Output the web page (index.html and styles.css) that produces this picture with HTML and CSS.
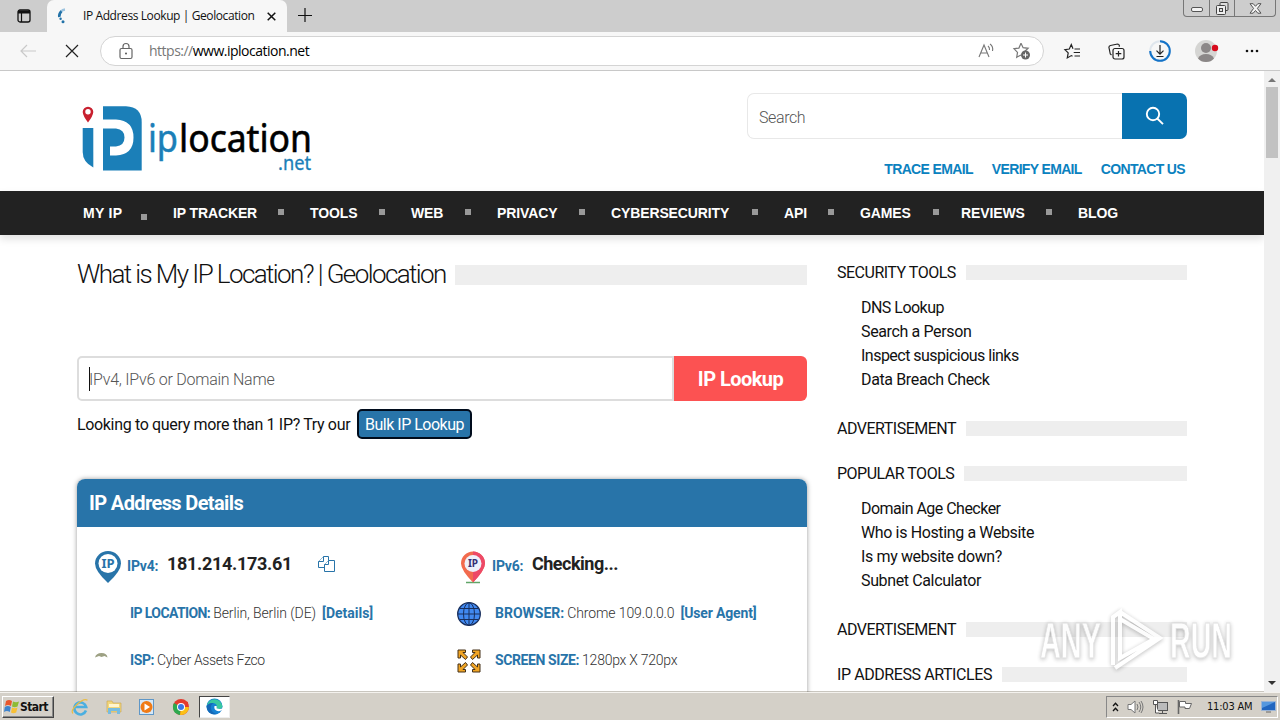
FILE: index.html
```html
<!DOCTYPE html>
<html lang="en">
<head>
  <meta charset="utf-8">
  <title>IP Address Lookup | Geolocation</title>
  <link rel="stylesheet" href="styles.css">
</head>
<body>
  <!-- browser tabs -->
  <div class="tab-bar">
    <div class="tab-actions">
      <svg width="14" height="14" viewBox="0 0 14 14"><rect x="1" y="1" width="12" height="12" rx="2" fill="none" stroke="#111" stroke-width="1.3"/><path d="M1 1.5h12v3H1z" fill="#111"/><path d="M4.5 4v9" stroke="#111" stroke-width="1.2"/></svg>
    </div>
    <div class="tab">
      <svg class="tab-spinner" width="12" height="16" viewBox="0 0 12 16"><path d="M8 1.5a6 6 0 0 0-4 2" fill="none" stroke="#9cc3df" stroke-width="2.4"/><path d="M4.5 3.2Q1.8 5.6 2.3 9" fill="none" stroke="#2272a8" stroke-width="2.6"/><circle cx="3.6" cy="10.7" r="1.2" fill="#2272a8"/><circle cx="6" cy="13.7" r="1.5" fill="#2272a8"/></svg>
      <span class="tab-title">IP Address Lookup | Geolocation</span>
      <svg class="tab-close" width="9" height="9" viewBox="0 0 9 9"><path d="M.7.7l7.6 7.6M8.3.7L.7 8.3" stroke="#111" stroke-width="1.5"/></svg>
    </div>
    <svg class="new-tab" width="14" height="14" viewBox="0 0 14 14"><path d="M7 0v14M0 7.5h14" stroke="#111" stroke-width="1.2"/></svg>
    <div class="window-buttons">
      <span><svg width="12" height="5"><rect x=".5" y=".5" width="11" height="4" rx="1.5" fill="#f4f4f4" stroke="#555"/></svg></span>
      <span><svg width="13" height="13" fill="#ddd" stroke="#444"><rect x="4" y=".5" width="8" height="8" rx="1"/><rect x=".5" y="3.5" width="9" height="9" rx="1" fill="#eee"/><rect x="3.5" y="6.5" width="3" height="3"/></svg></span>
      <span><svg width="13" height="11" viewBox="0 0 13 11"><path d="M1 .7h3.2l2.3 2.6L8.8.7H12L8.4 5.4 12 10.2H8.8L6.5 7.5 4.2 10.2H1l3.6-4.8z" fill="#f4f4f4" stroke="#555"/></svg></span>
    </div>
  </div>

  <!-- address bar -->
  <div class="toolbar">
    <svg class="back" width="18" height="14" viewBox="0 0 18 14"><path d="M8 1L2 7l6 6M2 7h15" fill="none" stroke="#c9c9c9" stroke-width="1.2"/></svg>
    <svg class="stop" width="14" height="14" viewBox="0 0 14 14"><path d="M1 1l12 12M13 1L1 13" stroke="#222" stroke-width="1.2"/></svg>
    <div class="address">
      <svg class="lock" width="14" height="17" viewBox="0 0 14 17"><rect x="1" y="5.5" width="12" height="10" rx="1.5" fill="none" stroke="#666" stroke-width="1.2"/><path d="M4 5.5V3.500a3 3 0 0 1 6 0v2" fill="none" stroke="#666" stroke-width="1.2"/><circle cx="7" cy="10.5" r="1" fill="#555"/></svg>
      <span class="url"><span>https://</span>www.iplocation.net</span>
      <svg class="read-aloud" width="17" height="16" viewBox="0 0 17 16" fill="none" stroke="#777" stroke-width="1.1"><path d="M1 14L6 2l5 12M2.7 10h6.6M10 3q1.8 1.5 1.5 4M12 1q3.5 2.5 2.5 7"/></svg>
      <svg class="favorite" width="18" height="18" viewBox="0 0 18 18"><path d="M8 1.2l2.1 4.5 5 .6-3.7 3.4M8 13l-4.3 2.3.8-4.9L1 6.800l4.900-.7L8 1.200" fill="none" stroke="#777" stroke-width="1.2"/><circle cx="12.5" cy="13" r="4.5" fill="#666"/><path d="M10 13h5M12.5 10.5v5" stroke="#fff"/></svg>
    </div>
    <svg class="favorites" width="17" height="17" viewBox="0 0 17 17" fill="none" stroke="#222" stroke-width="1.2"><path d="M9 5.7L7.3 1.5 5.3 6 .9 6.600l3.300 3.300-.9 5 4-2.300 1.200.7M10.500 6H16M9.700 9.500H16M10.500 13H16"/></svg>
    <svg class="collections" width="17" height="17" viewBox="0 0 17 17" fill="none" stroke="#222" stroke-width="1.2"><path d="M3.5 12L2.3 11 .9 4.300Q1 2.800 2.500 2.500L9.500 1q1.500 0 1.800 1.300v1.500"/><rect x="5" y="5.5" width="11" height="10.5" rx="2"/><path d="M10.5 8v5.500M7.700 10.700h5.600"/></svg>
    <svg class="downloads" width="22" height="22" viewBox="0 0 22 22" fill="none"><circle cx="11" cy="11" r="9.8" stroke="#dfe6ed" stroke-width="2"/><path d="M11 1.200a9.800 9.800 0 1 1-9.800 9.800" stroke="#1473c8" stroke-width="2"/><path d="M11 5v9M7.500 10.700L11 14.200l3.500-3.500M7.500 16.500h7" stroke="#222" stroke-width="1.2"/></svg>
    <svg class="profile" width="24" height="22" viewBox="0 0 24 22"><circle cx="11" cy="11" r="11" fill="#d5d5d3"/><circle cx="11" cy="8" r="5" fill="#8b8787"/><path d="M3 18.500Q5 14 11 14t8 4.500Q16 22 11 22t-8-3.500" fill="#8b8787"/><circle cx="20" cy="8" r="3.200" fill="#d70b1c"/></svg>
    <svg class="more" width="14" height="4" fill="#111"><circle cx="2" cy="2" r="1.3"/><circle cx="7" cy="2" r="1.3"/><circle cx="12" cy="2" r="1.3"/></svg>
  </div>

  <div class="viewport">
    <div class="page">
      <header class="header">
        <svg class="logo" width="234" height="70" viewBox="0 0 234 70">
          <path d="M6 18.500Q1 12 .7 8a5.300 5.300 0 0 1 10.600 0Q11 12 6 18.500z" fill="#c8202f"/><circle cx="6" cy="7.8" r="2.7" fill="#fff"/>
          <path d="M.7 24h10.600v39.500Q.7 58 .7 48z" fill="#1b7fb8"/>
          <path d="M21 2.200h23Q59.700 3 59.700 18v48.500H21z" fill="#1b7fb8"/>
          <path d="M21 15.500h13q17.500 1 17.500 18T34 51.500h-6V42.500h6q8.500-1 8.500-9T34 24.500H21z" fill="#fff"/>
          <text class="logo-ip" x="66" y="48" textLength="30" lengthAdjust="spacingAndGlyphs">ip</text>
          <text class="logo-name" x="97" y="48" textLength="133" lengthAdjust="spacingAndGlyphs">location</text>
          <text class="logo-net" x="196" y="66" textLength="33" lengthAdjust="spacingAndGlyphs">.net</text>
        </svg>
        <div class="header-right">
          <div class="search">
            <div class="search-input">Search</div>
            <div class="search-button"><svg width="20" height="20" viewBox="0 0 20 20" fill="none" stroke="#fff" stroke-width="1.9"><circle cx="8" cy="8" r="6.2"/><path d="M12.300 12.500l5.700 5.700"/></svg></div>
          </div>
          <div class="top-links"><a>TRACE EMAIL</a><a>VERIFY EMAIL</a><a>CONTACT US</a></div>
        </div>
      </header>

      <nav class="nav">
        <a class="low">MY IP</a><a>IP TRACKER</a><a>TOOLS</a><a>WEB</a><a>PRIVACY</a><a>CYBERSECURITY</a><a>API</a><a class="wide">GAMES</a><a>REVIEWS</a><a>BLOG</a>
      </nav>

      <div class="content">
        <main class="main">
          <h1 class="title"><span>What is My IP Location? | Geolocation</span></h1>
          <div class="lookup">
            <div class="lookup-input"><i class="caret"></i>IPv4, IPv6 or Domain Name</div>
            <div class="lookup-button">IP Lookup</div>
          </div>
          <div class="bulk"><span>Looking to query more than 1 IP? Try our</span><a class="bulk-button">Bulk IP Lookup</a></div>

          <section class="card">
            <h2 class="card-title">IP Address Details</h2>
            <div class="ip-grid">
              <div class="ip">
                <svg width="26" height="32" viewBox="0 0 26 32"><path d="M13 32Q0 20 0 12.500a13 12.500 0 0 1 26 0Q26 20 13 32z" fill="#2874a9"/><circle cx="13" cy="12.5" r="9.5" fill="#fff"/><text class="pin-text" x="13" y="17" fill="#2874a9">IP</text></svg>
                <b class="ip-label">IPv4:</b>
                <b class="ip-value">181.214.173.61</b>
                <svg class="copy" width="17" height="17" viewBox="0 0 17 17" fill="#fff" stroke="#2874a9"><path d="M5.500.5h5v11H.5V5.500z"/><path d="M5.500.5v5h-5"/><path d="M10.500 4.500h6v11h-10V8.500z"/><path d="M10.500 4.500v4h-4"/></svg>
              </div>
              <div class="ip ip6">
                <svg width="26" height="33" viewBox="0 0 26 33"><path d="M6 31.500h14" stroke="#61a568" stroke-width="1.5"/><path d="M13 31.500Q1 19 1 12.500a12 12 0 0 1 24 0Q25 19 13 31.500z" fill="#f26b4e"/><path d="M13 .5a12 12 0 0 1 12 12Q25 19 13 31.500z" fill="#ed4967"/><circle cx="13" cy="12.5" r="8.5" fill="#eef1fb"/><text class="pin-text small" x="13" y="16" fill="#342d73">IP</text></svg>
                <b class="ip-label">IPv6:</b>
                <b class="ip-value checking">Checking...</b>
              </div>
            </div>
            <div class="details">
              <div class="detail"><i class="icon"></i><b class="caps">IP LOCATION:</b><span>Berlin, Berlin (DE)</span><b class="link">[Details]</b></div>
              <div class="detail"><svg class="icon" viewBox="0 0 24 24" fill="none" stroke="#182e5c"><circle cx="12" cy="12" r="11.3" fill="#4189f0" stroke-width="1.3"/><ellipse cx="12" cy="12" rx="5.5" ry="11.3"/><path d="M12 .7v22.600M1 12h22M3 6.500h18M3 17.500h18"/></svg><b>BROWSER:</b><span>Chrome 109.0.0.0</span><b class="link agent">[User Agent]</b></div>
              <div class="detail"><svg class="icon" viewBox="0 0 24 24"><path d="M3 8.500q1-4.500 6.500-4.500t6 4.500l-3-1.500-3 1-2.500-1z" fill="#9da183"/></svg><b class="isp">ISP:</b><span class="provider">Cyber Assets Fzco</span></div>
              <div class="detail">
                <svg class="icon" viewBox="0 0 24 24" fill="#f1a524" stroke="#443018" stroke-width="1" stroke-linejoin="round"><g id="arrow"><path d="M1 1h7.500v2.500H6L10.500 8 8.500 10.500 3.500 6v3H1z"/></g><use href="#arrow" transform="matrix(-1 0 0 1 24 0)"/><use href="#arrow" transform="matrix(1 0 0 -1 0 24)"/><use href="#arrow" transform="matrix(-1 0 0 -1 24 24)"/></svg>
                <b class="screen">SCREEN SIZE:</b><span class="pixels">1280px X 720px</span>
              </div>
            </div>
          </section>
        </main>

        <aside class="sidebar">
          <h3>SECURITY TOOLS</h3>
          <ul><li class="dns">DNS Lookup</li><li>Search a Person</li><li class="dns">Inspect suspicious links</li><li>Data Breach Check</li></ul>
          <h3 class="ad">ADVERTISEMENT</h3>
          <h3>POPULAR TOOLS</h3>
          <ul><li class="dns">Domain Age Checker</li><li>Who is Hosting a Website</li><li>Is my website down?</li><li>Subnet Calculator</li></ul>
          <h3 class="ad">ADVERTISEMENT</h3>
          <h3 class="articles">IP ADDRESS ARTICLES</h3>
        </aside>
      </div>
    </div>

    <div class="scrollbar"><i class="up"></i><i class="thumb"></i><i class="down"></i></div>

    <svg class="watermark" width="204" height="70" viewBox="0 0 204 70">
      <text x="4" y="54" textLength="61" lengthAdjust="spacingAndGlyphs">ANY</text>
      <path d="M77 61V13l7-5v46l34-19-34-20M84 8l40 26-39 26-6 4" />
      <text x="134" y="54" textLength="62" lengthAdjust="spacingAndGlyphs">RUN</text>
    </svg>
  </div>

  <div class="taskbar">
    <div class="start"><svg width="16" height="16" viewBox="0 0 16 16"><path d="M2 2q3-2 6 0L7 7Q4 5 1 7z" fill="#e9572c"/><path d="M9 2.500q3 1.500 6 0L13.500 7.500q-3 1.500-5.500 0z" fill="#8dbb35"/><path d="M.8 8q3-2 6 0l-1 5q-3-2-5.800 0z" fill="#3f84cd"/><path d="M8 8.500q3 1.500 5.500 0l-1.300 5q-3 1.500-5.200 0z" fill="#f8c035"/></svg>Start</div>
    <div class="quick-launch">
      <svg width="18" height="18" viewBox="0 0 18 18"><path d="M15 12.500A6 6 0 1 1 15.200 9H4" fill="none" stroke="#4bafe0" stroke-width="2.6"/><path d="M2 15.500Q-1 13 6 6.500T16.500 2.300" fill="none" stroke="#e9bc45" stroke-width="1.3"/></svg>
      <svg width="18" height="18" viewBox="0 0 18 18"><path d="M2 3h5l1 2h8v9H2z" fill="#f1d67c" stroke="#c7a34b" stroke-width=".6"/><path d="M4 6h10v3H4z" fill="#fff5cf"/><path d="M3 16v-6h12v6h-3v-3H6v3z" fill="#77bce0"/></svg>
      <svg width="18" height="18" viewBox="0 0 18 18"><rect x="1.5" y="1.5" width="14" height="15" fill="#d6e8f7" stroke="#5f97c7"/><circle cx="8.5" cy="9" r="6" fill="#f07b16"/><path d="M6.500 5.500L12 9l-5.500 3.500z" fill="#fff"/></svg>
      <svg width="18" height="18" viewBox="0 0 18 18"><circle cx="9" cy="9" r="8" fill="#e33b2e"/><path d="M9 9l-7-4A8 8 0 0 0 8 17z" fill="#2da94f"/><path d="M9 9h8a8 8 0 0 1-9 8z" fill="#fbc116"/><path d="M9 5h7" stroke="#e33b2e" stroke-width="2"/><circle cx="9" cy="9" r="4" fill="#fff"/><circle cx="9" cy="9" r="3" fill="#3978e7"/></svg>
      <div class="active-app"><svg width="17" height="17" viewBox="0 0 17 17"><circle cx="8.5" cy="8.5" r="8" fill="#1681d2"/><path d="M.6 8a8 8 0 0 1 15.800 0c.2 3-4 3.500-6 2.300Q12 6 7.500 5 3 4.600.6 8" fill="#39c8a0"/><path d="M.6 8Q3 4.500 7.500 5 4 7 5 11t6 5A8 8 0 0 1 .6 8" fill="#1568b6"/><path d="M8.500 8q-1 4 3 5 3 .5 4.500-1l1-2q-3 2-6.500.3Q11 9 10.500 8z" fill="#fff"/></svg></div>
    </div>
    <div class="tray">
      <svg width="7" height="10" viewBox="0 0 7 10" fill="none" stroke="#111" stroke-width="1.3"><path d="M1 4l2.500-2.700L6 4M1 9l2.500-2.700L6 9"/></svg>
      <svg class="volume" width="17" height="16" viewBox="0 0 17 16" fill="#fff" stroke="#777"><path d="M1 5.500h3L8 2v12l-4-3.500H1z"/><path d="M10 5q2 3 0 6M12 3q3.500 5 0 10M14 2q4 6 0 12" fill="none"/></svg>
      <svg width="17" height="16" viewBox="0 0 17 16" fill="#fff" stroke="#555"><rect x="5.5" y="3.5" width="10" height="8" fill="#bbb"/><path d="M7 14.500h8M10.500 12v2" /><path d="M1.500 1.500h4v4h-4zM3.500 6v8H7" /></svg>
      <svg width="16" height="16" viewBox="0 0 16 16" fill="#fff" stroke="#666"><path d="M1.500 1v14" stroke-width="1.6"/><path d="M2.500 2.500h6v2h6l-2 5H8v-1.500H2.500z"/></svg>
      <span class="clock">11:03 AM</span>
      <svg width="15" height="12" viewBox="0 0 15 12"><path d="M.5.5h14v9h-14z" fill="#2166c0" stroke="#9ab4d6"/><path d="M1 1h13L1 7z" fill="#5598df"/><path d="M5 11h5" stroke="#666"/></svg>
    </div>
  </div>
</body>
</html>
```
FILE: styles.css
```css
* {
  box-sizing: border-box;
}

body {
  margin: 0;
  height: 720px;
  display: flex;
  flex-direction: column;
  overflow: hidden;
  font-family: Roboto, sans-serif;
  font-size: 16px;
  color: #111;
  background: #fff;
}

svg {
  display: block;
  flex: none;
  overflow: visible;
}

h1, h2, h3, ul {
  margin: 0;
  padding: 0;
  font-weight: normal;
}

span, a, b, h2, li {
  white-space: nowrap;
}

/* browser */
.tab-bar {
  height: 32px;
  flex: none;
  display: flex;
  background: #cdcdcd;
}

.tab-actions {
  width: 47px;
  padding: 9px 0 0 17px;
}

.tab {
  width: 240px;
  display: flex;
  align-items: center;
  padding-left: 10px;
  background: #f7f7f7;
  border-radius: 7px 7px 0 0;
}

.tab-title {
  width: 173px;
  margin: -2px 0 0 14px;
  font: 12px "Open Sans", sans-serif;
  letter-spacing: -0.4px;
}

.tab-close {
  margin-left: 11px;
}

.new-tab {
  margin: 8px 0 0 11px;
}

.window-buttons {
  display: flex;
  width: 93px;
  height: 17px;
  margin: 0 4px 0 auto;
  border: 1px solid #777;
  border-top: 0;
  border-radius: 0 0 4px 4px;
}

.window-buttons span {
  width: 25px;
  display: flex;
  align-items: center;
  justify-content: center;
}

.window-buttons span:first-child {
  padding-top: 3px;
}

.window-buttons span + span {
  border-left: 1px solid #777;
}

.window-buttons span:last-child {
  flex: 1;
}

.toolbar {
  height: 39px;
  flex: none;
  display: flex;
  align-items: center;
  background: #f7f7f7;
  border-bottom: 1px solid #c8c8c8;
}

.back {
  margin-left: 19px;
}

.stop {
  margin-left: 28px;
}

.address {
  width: 944px;
  height: 30px;
  display: flex;
  align-items: center;
  margin-left: 21px;
  padding: 0 12px 0 18px;
  background: #fff;
  border: 1px solid #d4d4d4;
  border-radius: 15px;
}

.url {
  margin: -2px 0 0 16px;
  font: 14px "Open Sans", sans-serif;
  letter-spacing: -0.5px;
  color: #000;
}

.url span {
  color: #777;
}

.read-aloud {
  margin-left: auto;
}

.favorite {
  margin-left: 18px;
}

.favorites {
  margin-left: 20px;
}

.collections {
  margin-left: 27px;
}

.downloads {
  margin-left: 24px;
}

.profile {
  margin-left: 24px;
}

.more {
  margin-left: 26px;
}

/* web page */
.viewport {
  position: relative;
  height: 621px;
  flex: none;
  display: flex;
  overflow: hidden;
}

.page {
  width: 1264px;
}

.header {
  height: 120px;
  display: flex;
  justify-content: space-between;
  padding: 22px 77px 0 82px;
}

.logo {
  margin-top: 11px;
}

.logo text {
  font-family: "Noto Sans", sans-serif;
}

.logo .logo-ip {
  font-size: 38px;
  fill: #1b7fb8;
  stroke: #1b7fb8;
  stroke-width: 0.5;
}

.logo .logo-name {
  font-size: 38px;
  fill: #000;
  stroke: #000;
  stroke-width: 0.6;
}

.logo .logo-net {
  font-size: 19px;
  fill: #1b7fb8;
  stroke: #1b7fb8;
  stroke-width: 0.3;
}

.search {
  width: 440px;
  height: 46px;
  display: flex;
}

.search-input {
  flex: 1;
  padding-left: 11px;
  line-height: 47px;
  font-weight: 300;
  color: #555;
  border: 1px solid #e8e8e8;
  border-right: 0;
  border-radius: 7px 0 0 7px;
  letter-spacing: -0.4px;
}

.search-button {
  width: 65px;
  display: flex;
  align-items: center;
  justify-content: center;
  background: #0872b0;
  border-radius: 0 7px 7px 0;
}

.top-links {
  display: flex;
  justify-content: flex-end;
  gap: 19px;
  padding: 22px 2px 0 0;
  font: bold 14px/16px "Liberation Sans", sans-serif;
  letter-spacing: -0.65px;
  color: #0b82bf;
}

.nav {
  height: 44px;
  display: grid;
  grid-template-columns: 90px 137px 101px 86px 114px 173px 76px 101px 117px 60px;
  padding-left: 83px;
  font: bold 14px/44px "Liberation Sans", sans-serif;
  letter-spacing: -0.12px;
  color: #fff;
  background: #222;
  box-shadow: 0 4px 8px rgba(0, 0, 0, 0.12);
}

.nav a {
  display: flex;
  justify-content: space-between;
}

.nav a:not(:last-child)::after {
  content: "";
  width: 6px;
  height: 6px;
  margin: 18px 26px 0 0;
  background: #999;
}

.nav .low {
  letter-spacing: 0.3px;
}

.nav .low::after {
  margin-top: 23px !important;
}

.nav .wide::after {
  margin-right: 22px !important;
}

.content {
  display: flex;
  gap: 30px;
  padding-left: 77px;
}

.main {
  width: 730px;
}

.title {
  height: 20px;
  display: flex;
  align-items: center;
  margin-top: 30px;
  font-size: 26px;
  font-weight: 300;
  line-height: 20px;
  letter-spacing: -1.59px;
}

.title span {
  width: 368px;
  margin: -2px 10px 0 0;
}

.title::after {
  content: "";
  flex: 1;
  height: 20px;
  background: #eee;
}

.lookup {
  height: 45px;
  display: flex;
  margin-top: 71px;
}

.lookup-input {
  flex: 1;
  display: flex;
  align-items: center;
  padding: 1px 0 0 10px;
  font-weight: 300;
  color: #555;
  border: 2px solid #ddd;
  border-radius: 5px 0 0 5px;
  letter-spacing: -0.25px;
}

.caret {
  width: 1px;
  height: 24px;
  margin: -1px -1px 0 0;
  background: #111;
}

.lookup-button {
  width: 133px;
  font-size: 20px;
  font-weight: bold;
  line-height: 47px;
  text-align: center;
  color: #fff;
  background: #fc5252;
  border-radius: 0 6px 6px 0;
  letter-spacing: -0.55px;
}

.bulk {
  display: flex;
  height: 30px;
  margin-top: 8px;
  line-height: 31px;
  letter-spacing: -0.34px;
}

.bulk span {
  width: 280px;
}

.bulk-button {
  width: 115px;
  line-height: 27px;
  text-align: center;
  color: #fff;
  background: #2874a9;
  border: 2px solid #000c1c;
  border-radius: 5px;
  letter-spacing: -0.5px;
}

.card {
  height: 240px;
  margin-top: 40px;
  border-radius: 8px 8px 0 0;
  box-shadow: 0 0 5px rgba(0, 0, 0, 0.4);
}

.card-title {
  height: 48px;
  padding-left: 12px;
  font-size: 20px;
  font-weight: bold;
  line-height: 49px;
  color: #fff;
  background: #2874a9;
  border-radius: 8px 8px 0 0;
  letter-spacing: -0.62px;
}

.ip-grid {
  display: grid;
  grid-template-columns: 365px 365px;
  padding: 23px 0 0 18px;
}

.ip {
  height: 34px;
  display: flex;
  align-items: center;
}

.pin-text {
  font: bold 13px "Noto Sans", sans-serif;
  text-anchor: middle;
}

.pin-text.small {
  font-size: 10px;
}

.ip-label {
  width: 34px;
  margin: -2px 0 0 6px;
  font-size: 14px;
  letter-spacing: -0.2px;
  color: #2874a9;
}

.ip-value {
  width: 125px;
  margin: -7px 0 0 6px;
  font-size: 18px;
  letter-spacing: -0.3px;
  color: #222;
}

.checking {
  letter-spacing: -0.5px;
}

.copy {
  margin: -6px 0 0 26px;
}

.details {
  display: grid;
  grid-template-columns: 365px 365px;
  grid-auto-rows: 47px;
  padding: 6px 0 0 15px;
  font-size: 14px;
}

.detail {
  display: flex;
  align-items: center;
}

.detail b {
  margin-top: -2px;
  color: #2874a9;
}

.detail span {
  margin: -2px 0 0 3px;
  font-weight: 300;
  letter-spacing: -0.1px;
  color: #333;
}

.detail .caps {
  letter-spacing: -0.6px;
}

.detail .screen, .detail .isp {
  letter-spacing: -0.4px;
}

.detail .provider {
  letter-spacing: -0.35px;
}

.detail .pixels {
  letter-spacing: -0.25px;
}

.icon {
  width: 24px;
  height: 24px;
  margin-right: 14px;
}

.detail .link {
  margin-left: 6px;
}

.detail .agent {
  letter-spacing: -0.15px;
}

.sidebar {
  width: 350px;
  padding-top: 30px;
}

.sidebar h3 {
  height: 15px;
  display: flex;
  align-items: center;
  font-size: 16px;
  font-weight: 400;
  line-height: 15px;
  letter-spacing: -0.5px;
}

.sidebar .articles {
  letter-spacing: -0.42px;
}

.sidebar h3::after {
  content: "";
  flex: 1;
  height: 15px;
  margin-left: 10px;
  background: #eee;
}

.sidebar .ad {
  margin-bottom: 30px;
}

.sidebar ul {
  margin: 16px 0 29px 24px;
  line-height: 24px;
  letter-spacing: -0.37px;
  list-style: none;
}

.sidebar .dns {
  letter-spacing: -0.52px;
}

.scrollbar {
  width: 16px;
  display: flex;
  flex-direction: column;
  align-items: center;
  background: #f0f0f0;
}

.scrollbar .up {
  height: 0;
  margin-top: 7px;
  border: 4px solid transparent;
  border-top: 0;
  border-bottom-color: #777;
}

.thumb {
  width: 12px;
  height: 71px;
  margin-top: 5px;
  background: #c2c2c2;
}

.down {
  margin: auto 0 7px;
  border: 4px solid transparent;
  border-bottom: 0;
  border-top-color: #333;
}

/* sits over the page corner */
.watermark {
  position: absolute;
  left: 1036px;
  top: 533px;
  fill: #fff;
  stroke: #ddd;
  stroke-width: 1;
  filter: drop-shadow(0 1px 2px rgba(0, 0, 0, 0.3));
  opacity: 0.85;
}

.watermark text {
  font: bold 50px "Liberation Sans", sans-serif;
}

.watermark path {
  fill: none;
  stroke: #fff;
  stroke-width: 4;
}

/* windows taskbar */
.taskbar {
  height: 28px;
  flex: none;
  display: flex;
  align-items: center;
  background: #d4d0c8;
  border-top: 1px solid #f4f2ee;
  box-shadow: 0 -1px #c9c6bf;
  font: 11px "DejaVu Sans Condensed", "DejaVu Sans", sans-serif;
}

.start {
  width: 52px;
  height: 22px;
  display: flex;
  align-items: center;
  margin-left: 2px;
  padding-left: 1px;
  font-size: 12px;
  font-weight: bold;
  letter-spacing: -0.6px;
  border: 1px solid;
  border-color: #fff #444 #444 #fff;
  box-shadow: inset -1px -1px #888;
}

.quick-launch {
  display: flex;
  align-items: center;
  gap: 16px;
  margin-left: 17px;
}

.quick-launch svg {
  margin-right: -0.3px;
}

.active-app {
  width: 31px;
  height: 22px;
  display: flex;
  align-items: center;
  justify-content: center;
  margin-left: -7px;
  background: #fff;
  border: 1px solid;
  border-color: #444 #eee #eee #444;
}

.tray {
  width: 172px;
  height: 22px;
  display: flex;
  align-items: center;
  margin: 0 2px 0 auto;
  padding-left: 5px;
  gap: 8px;
  border: 1px solid;
  border-color: #888 #fff #fff #888;
}

.clock {
  width: 47px;
  margin-left: 6px;
  margin-right: -1px;
  letter-spacing: -0.2px;
}
```
